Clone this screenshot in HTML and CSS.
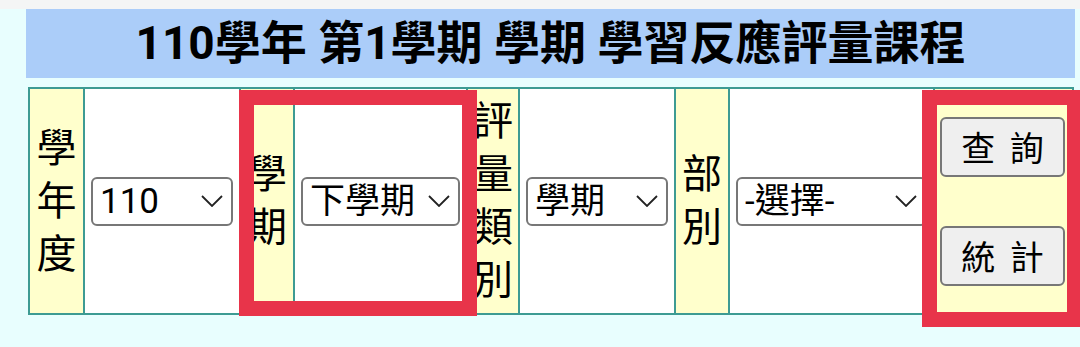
FILE: index.html
```html
<!DOCTYPE html>
<html>
<head>
    <title>學習反應評量課程</title>
    <link rel="stylesheet" href="styles.css">
</head>
<body>
    <div class="topstrip"></div>

    <div class="page">
        <h1 class="title">110學年 第1學期 學期 學習反應評量課程</h1>

        <div class="query">
            <div class="lbl">學年度</div>
            <div class="val">
                <div class="sel">
                    <select><option>110</option></select>
                    <svg class="chev" width="22" height="12" viewBox="0 0 22 12"><path d="M1 1 L11 11 L21 1" fill="none" stroke="#222" stroke-width="1.8"/></svg>
                </div>
            </div>

            <div class="lbl">學期</div>
            <div class="val">
                <div class="sel">
                    <select><option>下學期</option></select>
                    <svg class="chev" width="22" height="12" viewBox="0 0 22 12"><path d="M1 1 L11 11 L21 1" fill="none" stroke="#222" stroke-width="1.8"/></svg>
                </div>
            </div>

            <div class="lbl">評量類別</div>
            <div class="val">
                <div class="sel">
                    <select><option>學期</option></select>
                    <svg class="chev" width="22" height="12" viewBox="0 0 22 12"><path d="M1 1 L11 11 L21 1" fill="none" stroke="#222" stroke-width="1.8"/></svg>
                </div>
            </div>

            <div class="lbl">部別</div>
            <div class="val">
                <div class="sel">
                    <select><option>-選擇-</option></select>
                    <svg class="chev" width="22" height="12" viewBox="0 0 22 12"><path d="M1 1 L11 11 L21 1" fill="none" stroke="#222" stroke-width="1.8"/></svg>
                </div>
            </div>

            <div class="lbl actions">
                <button>查 詢</button>
                <button>統 計</button>
            </div>
        </div>
    </div>

    <!-- annotation boxes drawn over the screenshot -->
    <div class="mark mark-term"></div>
    <div class="mark mark-buttons"></div>
</body>
</html>
```

FILE: styles.css
```css
body { margin: 0; background: #e8fefe; font-family: Roboto, "Noto Sans CJK TC", sans-serif; color: #000; }
.topstrip { height: 9px; background: #f4f5f5; }
.page { padding-left: 26px; }

.title { width: 1049px; height: 69px; margin: 0; background: #abcdf9; font-size: 46px; font-weight: bold; line-height: 69px; text-align: center; }

.query {
    display: grid;
    grid-template-columns: 53px 154px 52px 171px 50px 154px 52px 203px 137px;
    gap: 2px; padding: 2px; margin: 9px 0 0 2px;
    width: max-content; background: #3d9b93;
}
.lbl { background: #ffffcc; font-size: 40px; line-height: 53px; padding: 6px 0; text-align: center; display: flex; align-items: center; justify-content: center; }
.val { background: #fff; display: flex; align-items: center; padding: 0 6px; }

.sel { position: relative; width: 100%; }
.sel select {
    appearance: none; -webkit-appearance: none;
    width: 100%; height: 49px; box-sizing: border-box;
    border: 2px solid #777; border-radius: 6px; background: #fff;
    font-family: Roboto, "Noto Sans CJK TC", sans-serif; font-size: 35px; color: #000;
    padding: 0 0 0 7px;
}
.chev { position: absolute; right: 10px; top: 18px; pointer-events: none; }

.actions { flex-direction: column; gap: 49px; padding: 0 7px 0 5px; }
.actions button {
    width: 125px; height: 60px; box-sizing: border-box;
    background: #efefef; border: 2px solid #777; border-radius: 6px;
    font-family: Roboto, "Noto Sans CJK TC", sans-serif; font-size: 34px; color: #000;
    word-spacing: 6px; padding: 0;
}

.mark { position: absolute; border: 15px solid #e8344a; box-sizing: border-box; }
.mark-term { left: 239px; top: 90px; width: 238px; height: 226px; }
.mark-buttons { left: 922px; top: 90px; width: 160px; height: 237px; }
```
